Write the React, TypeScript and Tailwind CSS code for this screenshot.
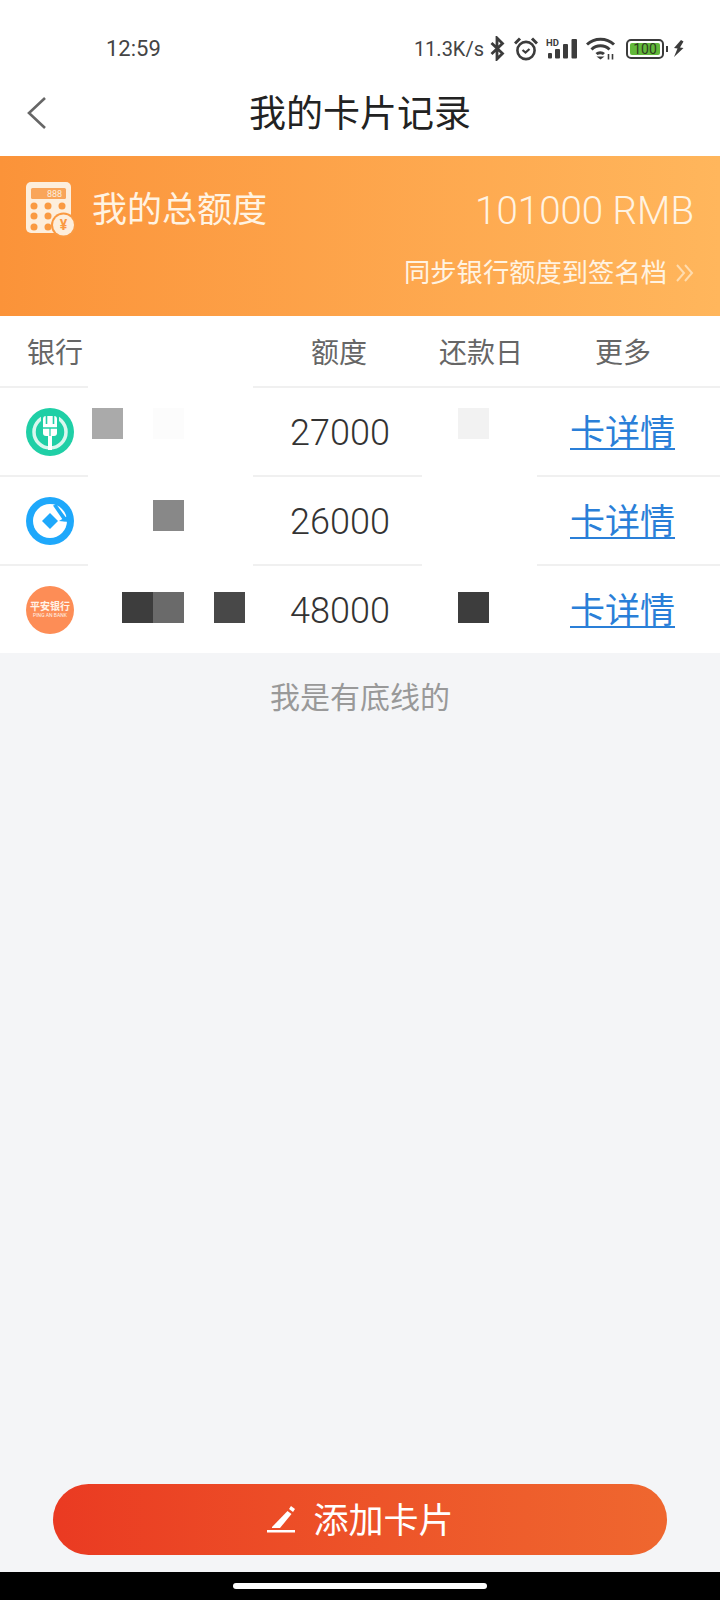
const FONT = "font-['Roboto','Noto_Sans_CJK_SC',sans-serif]"

function Bluetooth() {
  return (
    <svg width="15" height="25" viewBox="0 0 15 25" fill="none" stroke="#3c3c3c" strokeWidth="2.8">
      <path d="M1.5 7l11 10.5L7 23V2l5.5 5.5L1.5 18" />
    </svg>
  )
}

function Alarm() {
  return (
    <svg width="24" height="24" viewBox="0 0 24 24" fill="none" stroke="#3c3c3c">
      <circle cx="12" cy="13.5" r="8.6" strokeWidth="2.6" />
      <path d="M8.5 13l3 2.6 4-3.6" strokeWidth="2.2" />
      <path d="M1 6.5L6 1.5M23 6.5l-5-5" strokeWidth="3" />
    </svg>
  )
}

function Signal() {
  return (
    <svg width="32" height="21" viewBox="0 0 32 21" fill="#3c3c3c">
      <text x="0" y="8" fontSize="9.5" fontWeight="700" fontFamily="Roboto, sans-serif">HD</text>
      <rect x="2" y="15" width="4" height="5.5" rx="1" />
      <rect x="9" y="11" width="5" height="9.500" rx="1" />
      <rect x="17" y="6" width="5" height="14.500" rx="1" />
      <rect x="25.500" y="1" width="5.500" height="19.500" rx="1" />
    </svg>
  )
}

function Wifi() {
  return (
    <svg width="30" height="23" viewBox="0 0 30 23" fill="none" stroke="#3c3c3c" strokeWidth="3">
      <path d="M1 7.500C8.500 0.500 20.500 0.500 28 7.500" />
      <path d="M5.500 12.500C10.500 7.500 18.500 7.500 23.500 12.500" />
      <path d="M10.500 17C12.500 15.200 16 15.200 18 17" />
      <path d="M10.500 19.500h8l-4 3z" fill="#3c3c3c" stroke="none" />
      <path d="M22.500 17v5.500M26.500 17v5.500" strokeWidth="1.600" />
    </svg>
  )
}

function Battery() {
  return (
    <div className="flex items-center gap-[2px]">
      <div className="w-[38px] h-[20px] rounded-[5px] border-[2px] border-[#3c3c3c] p-[2px] flex">
        <div className="flex-1 rounded-[2px] bg-[#62b83a] flex items-center justify-center text-[14px] leading-none text-[#2d3d20]">
          100
        </div>
      </div>
      <div className="w-[2px] h-[6px] bg-[#3c3c3c]" />
    </div>
  )
}

function Bolt() {
  return (
    <svg width="11" height="17" viewBox="0 0 11 17" fill="#3c3c3c">
      <path d="M8 0L1 8l3.500.5L1 17l9.500-9L7 7.500l3.500-6z" />
    </svg>
  )
}

function StatusBar() {
  return (
    <div className="h-[76px] flex items-start pt-[36px] bg-white">
      <span className="ml-[106px] text-[22px] leading-[26px] text-[#444]">12:59</span>
      <div className="ml-auto mr-[36px] flex items-center h-[25px] text-[#444]">
        <span className="text-[20px] leading-none">11.3K/s</span>
        <div className="ml-[6px]"><Bluetooth /></div>
        <div className="ml-[9px]"><Alarm /></div>
        <div className="ml-[8px]"><Signal /></div>
        <div className="ml-[8px]"><Wifi /></div>
        <div className="ml-[10px]"><Battery /></div>
        <div className="ml-[5px]"><Bolt /></div>
      </div>
    </div>
  )
}

function CalcIcon() {
  return (
    <svg width="50" height="56" viewBox="0 0 50 56">
      <rect x="0" y="0" width="45" height="51" rx="5" fill="#fdeedc" />
      <rect x="5" y="6" width="35" height="11" rx="1.500" fill="#f9a55a" />
      <text x="21" y="15" fontSize="9" fill="#fdeedc" fontFamily="Roboto, sans-serif">888</text>
      {[8, 22, 36].map((cx) =>
        [24, 34, 45].map((cy) =>
          cx === 36 && cy > 30 ? null : <circle key={`${cx}-${cy}`} cx={cx} cy={cy} r="3.500" fill="#fa9a42" />,
        ),
      )}
      <circle cx="37.500" cy="43" r="12.500" fill="#fa9a42" />
      <circle cx="37.500" cy="43" r="10.500" fill="#fdeedc" />
      <text x="37.500" y="48" fontSize="14" fontWeight="700" textAnchor="middle" fill="#fa9a42" fontFamily="Roboto, sans-serif">¥</text>
    </svg>
  )
}

function AbcLogo() {
  return (
    <svg width="48" height="48" viewBox="0 0 48 48">
      <circle cx="24" cy="24" r="24" fill="#1fcfa6" />
      <circle cx="24" cy="24" r="16" fill="none" stroke="#d9f7ee" strokeWidth="3.500" />
      <rect x="15" y="4" width="18" height="12" fill="#1fcfa6" />
      <path d="M24 42V28" stroke="#fff" strokeWidth="4" />
      <rect x="17" y="8" width="14" height="20" rx="3" fill="#fff" />
      <path d="M20.500 7v9M27.500 7v9M17 20h14" stroke="#1fcfa6" strokeWidth="1.600" />
      <path d="M24 20v8" stroke="#1fcfa6" strokeWidth="1.200" />
    </svg>
  )
}

function CcbLogo() {
  return (
    <svg width="48" height="48" viewBox="0 0 48 48">
      <circle cx="24" cy="24" r="24" fill="#1ea8fb" />
      <circle cx="24" cy="24" r="17" fill="#fff" />
      <path d="M24 16l8 8-8 8-8-8z" fill="#1ea8fb" />
      <path d="M27 8.500l3.500-1L41 22l-3 2.500z" fill="#1ea8fb" />
      <path d="M33 24l10-6v7z" fill="#1ea8fb" />
    </svg>
  )
}

function PinganLogo() {
  return (
    <div className="w-[48px] h-[48px] rounded-full bg-[#fd8d56] flex flex-col items-center justify-center text-[#fff3e8]">
      <span className="text-[10px] leading-[11px] font-bold whitespace-nowrap">平安银行</span>
      <span className="text-[5px] leading-[6px] whitespace-nowrap">PING AN BANK</span>
    </div>
  )
}

interface Patch {
  left: string
  color: string
}

interface Row {
  logo: React.ReactNode
  amount: string
  top: string
  patches: Patch[]
}

const ROWS: Row[] = [
  {
    logo: <AbcLogo />,
    amount: '27000',
    top: 'top-[20px]',
    patches: [
      { left: 'left-[92px]', color: 'bg-[#aaaaaa]' },
      { left: 'left-[153px]', color: 'bg-[#fcfcfc]' },
      { left: 'left-[458px]', color: 'bg-[#f2f2f2]' },
    ],
  },
  {
    logo: <CcbLogo />,
    amount: '26000',
    top: 'top-[23px]',
    patches: [{ left: 'left-[153px]', color: 'bg-[#888888]' }],
  },
  {
    logo: <PinganLogo />,
    amount: '48000',
    top: 'top-[26px]',
    patches: [
      { left: 'left-[122px]', color: 'bg-[#3d3d3d]' },
      { left: 'left-[153px]', color: 'bg-[#6a6a6a]' },
      { left: 'left-[214px]', color: 'bg-[#484848]' },
      { left: 'left-[458px]', color: 'bg-[#3d3d3d]' },
    ],
  },
]

function CardRow({ row, index }: { row: Row; index: number }) {
  return (
    <div className="relative h-[89px] border-t-[2px] border-[#f0f0f0] flex items-center bg-white">
      <div className="ml-[26px] w-[48px] h-[48px]">{row.logo}</div>
      <span className="absolute left-[240px] w-[200px] text-center text-[36px] font-light leading-none text-[#333] mt-[2px]">{row.amount}</span>
      <a className="absolute left-[570px] mt-[4px] text-[35px] leading-[44px] text-[#2a7fd8] underline underline-offset-[3px] decoration-[1.500px]">
        卡详情
      </a>
      {/* blurred-out cells hide part of the divider */}
      <div className="absolute -top-[2px] left-[88px] w-[165px] h-[2px] bg-white" />
      {index > 0 && <div className="absolute -top-[2px] left-[422px] w-[115px] h-[2px] bg-white" />}
      {row.patches.map((p) => (
        <div key={p.left} className={`absolute ${row.top} ${p.left} ${p.color} w-[31px] h-[31px]`} />
      ))}
    </div>
  )
}

export default function App() {
  return (
    <div className={`w-[720px] h-[1600px] flex flex-col bg-[#f4f5f7] ${FONT}`}>
      <StatusBar />

      <div className="relative h-[80px] bg-white flex items-center justify-center">
        <svg className="absolute left-[26px] top-[20px]" width="22" height="34" viewBox="0 0 22 34" fill="none" stroke="#666" strokeWidth="2.600">
          <path d="M19 2L3 17l16 15" />
        </svg>
        <span className="text-[37px] leading-none text-[#222] -mt-[3px]">我的卡片记录</span>
      </div>

      <div className="h-[160px] bg-gradient-to-r from-[#fb9339] to-[#ffb65c] text-[#fff3e2] flex flex-col pl-[26px] pr-[26px]">
        <div className="flex items-start pt-[26px]">
          <CalcIcon />
          <span className="ml-[16px] mt-[8px] text-[35px] leading-[42px]">我的总额度</span>
          <span className="ml-auto mt-[8px] text-[38.500px] font-light leading-[42px]">101000 RMB</span>
        </div>
        <div className="self-end flex items-center mt-[17px]">
          <span className="text-[26.300px] leading-[36px]">同步银行额度到签名档</span>
          <svg className="ml-[9px]" width="18" height="20" viewBox="0 0 18 20" fill="none" stroke="#ffdcae" strokeWidth="2">
            <path d="M1 2l7 8-7 8M9 2l7 8-7 8" />
          </svg>
        </div>
      </div>

      <div className="relative h-[70px] bg-white text-[28px] text-[#666] flex items-center">
        <span className="absolute left-[27px] mt-[5px]">银行</span>
        <span className="absolute left-[311px] mt-[5px]">额度</span>
        <span className="absolute left-[439px] mt-[5px]">还款日</span>
        <span className="absolute left-[595px] mt-[5px]">更多</span>
      </div>

      {ROWS.map((row, i) => (
        <CardRow key={row.amount} row={row} index={i} />
      ))}

      <p className="mt-[24px] text-center text-[30px] leading-[42px] text-[#999]">我是有底线的</p>

      <div className="mt-auto mb-[17px] mx-[53px] h-[71px] rounded-full bg-gradient-to-r from-[#ea3a22] to-[#ef672f] flex items-center justify-center text-white">
        <svg width="30" height="30" viewBox="0 0 30 30" fill="#fff">
          <path d="M25 1l4 3-2 3-4-3z" />
          <path d="M21.500 6l4 3L14 23H6v-1z" />
          <rect x="1" y="25" width="28" height="2.500" />
        </svg>
        <span className="ml-[17px] text-[35px] leading-none mt-[3px]">添加卡片</span>
      </div>

      <div className="h-[28px] bg-black flex items-center justify-center">
        <div className="w-[254px] h-[6px] rounded-full bg-white" />
      </div>
    </div>
  )
}
